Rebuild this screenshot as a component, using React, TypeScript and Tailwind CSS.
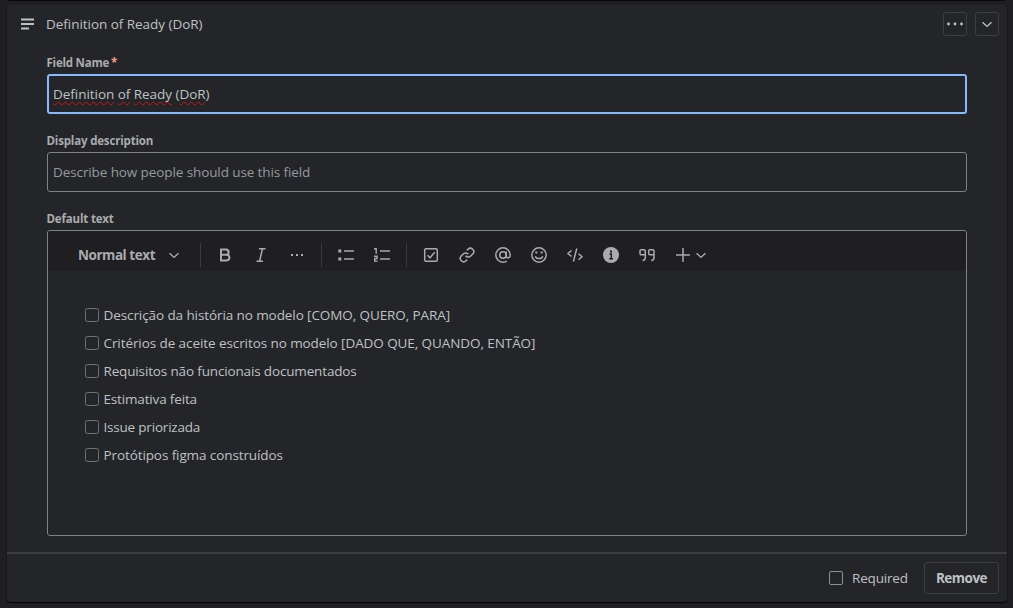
import type { ReactNode } from 'react';

const Icon = ({ children, className = '' }: { children: ReactNode; className?: string }) => (
  <svg
    width="24"
    height="24"
    viewBox="0 0 24 24"
    fill="none"
    stroke="currentColor"
    strokeWidth="1.5"
    className={`shrink-0 ${className}`}
  >
    {children}
  </svg>
);

const Tool = ({ label, children }: { label: string; children: ReactNode }) => (
  <button aria-label={label} className="flex h-8 w-9 items-center justify-center">
    <Icon>{children}</Icon>
  </button>
);

const Separator = () => <span className="h-6 w-px shrink-0 bg-[#3a3b3f]" />;

const Chevron = ({ className = '' }: { className?: string }) => (
  <Icon className={className}>
    <path d="M7.5 10.2l4.5 4.2 4.5-4.2" strokeWidth="1.4" />
  </Icon>
);

const tasks = [
  { text: 'Descrição da história no modelo [COMO, QUERO, PARA]', spacing: 'tracking-[-0.09px]' },
  { text: 'Critérios de aceite escritos no modelo [DADO QUE, QUANDO, ENTÃO]', spacing: 'tracking-[-0.08px]' },
  { text: 'Requisitos não funcionais documentados', spacing: 'tracking-[-0.15px]' },
  { text: 'Estimativa feita', spacing: 'tracking-[-0.16px]' },
  { text: 'Issue priorizada', spacing: 'tracking-[-0.2px]' },
  { text: 'Protótipos figma construídos', spacing: 'tracking-[-0.1px]' },
];

const misspelled =
  'underline decoration-wavy decoration-[#d01218] decoration-[1px] underline-offset-[2px] [text-decoration-skip-ink:none]';

export default function App() {
  return (
    <div className="flex h-[608px] w-[1013px] flex-col bg-[#1f1f21] font-['Open_Sans',sans-serif] text-[13.5px] text-[#bfc1c4]">
      <div className="mx-2 h-px shrink-0 bg-[#08080a]" />
      <section className="mt-[3px] mr-[6px] ml-[7px] flex h-[598px] flex-col rounded-[4px] bg-[#242528] shadow-[0_1px_1px_#050506,0_0_1px_#050506]">
        <header className="flex h-10 items-center pr-2 pl-[8px]">
          <Icon>
            <path d="M6 7.5h13M6 12h13M6 16.5h8" strokeWidth="2" />
          </Icon>
          <h1 className="ml-[7px] grow text-[13.5px] tracking-[-0.04px]">Definition of Ready (DoR)</h1>
          <button
            aria-label="More actions"
            className="mr-2 flex size-6 items-center justify-center rounded-[3px] border border-[#3c3d41]"
          >
            <svg width="16" height="4" viewBox="0 0 16 4" fill="currentColor" className="shrink-0">
              <circle cx="1.5" cy="2" r="1.4" />
              <circle cx="8" cy="2" r="1.4" />
              <circle cx="14.5" cy="2" r="1.4" />
            </svg>
          </button>
          <button
            aria-label="Collapse"
            className="flex size-6 items-center justify-center rounded-[3px] border border-[#3c3d41]"
          >
            <Chevron />
          </button>
        </header>

        <div className="flex grow flex-col pr-10 pl-10">
          <label className="mt-[11px] flex h-4 items-center text-[11.5px] font-bold tracking-[-0.22px] text-[#a9abaf]">
            <span className="-ml-[0.5px]">Field Name</span>
            <span className="ml-[2px] text-[#fd9891]">*</span>
          </label>
          <div className="mt-[3px] flex h-10 items-center rounded-[3px] border-2 border-[#85b8ff] px-[4px]">
            <p className="tracking-[-0.04px] whitespace-nowrap">
              <span className={misspelled}>Definition</span> <span className={misspelled}>of</span>{' '}
              <span className={misspelled}>Ready</span> (<span className={misspelled}>DoR</span>)
            </p>
          </div>

          <label className="mt-[19px] flex h-4 items-center text-[11.5px] font-bold tracking-[-0.17px] text-[#a9abaf]">
            <span className="-ml-[0.5px]">Display description</span>
          </label>
          <div className="mt-[3px] flex h-10 items-center rounded-[3px] border border-[#7e8188] px-[5px] tracking-[-0.1px] text-[#96999e]">
            Describe how people should use this field
          </div>

          <label className="mt-[19px] flex h-4 items-center text-[11.5px] font-bold tracking-[-0.17px] text-[#a9abaf]">
            <span className="-ml-[0.5px]">Default text</span>
          </label>
          <div className="mt-[3px] flex h-[306px] flex-col overflow-hidden rounded-[3px] border border-[#7e8188]">
            <div className="flex h-10 shrink-0 items-center bg-[#1f1f21] pt-[7px] pl-[30px] text-[#a9abaf]">
              <button className="flex h-8 w-[122px] items-center font-bold tracking-[-0.45px]">
                <span className="w-[84px] pt-[2px] text-left whitespace-nowrap">Normal text</span>
                <Chevron />
              </button>
              <Separator />
              <span className="w-[6px]" />
              <Tool label="Bold">
                <path
                  d="M8 6.6h5a2.6 2.6 0 010 5.2H8zM8 11.8h5.6a2.8 2.8 0 010 5.6H8z"
                  strokeWidth="2"
                />
              </Tool>
              <Tool label="Italic">
                <path d="M10 5.8h6.5M7.5 18.2H14M13.5 5.8L10.5 18.2" />
              </Tool>
              <Tool label="More formatting">
                <path d="M6 11h2v2H6zM11 11h2v2h-2zM16 11h2v2h-2z" fill="currentColor" stroke="none" />
              </Tool>
              <span className="w-[6px]" />
              <Separator />
              <span className="w-[6px]" />
              <Tool label="Bullet list">
                <path d="M10 8h10M10 16h10" />
                <path d="M4.3 6.5h3v3h-3zM4.3 14.5h3v3h-3z" fill="currentColor" stroke="none" />
              </Tool>
              <Tool label="Numbered list">
                <path d="M10 8h10M10 16h10" />
                <path d="M4 5.8h2.2v5M4 13.3h3v2.2H4.7v2.6h3" strokeWidth="1.4" />
              </Tool>
              <span className="w-[6px]" />
              <Separator />
              <span className="w-[6px]" />
              <Tool label="Action item">
                <rect x="5.7" y="5.7" width="12.6" height="12.6" rx="1.3" />
                <path d="M8.5 12.2l2.5 2.6 4.7-5.6" />
              </Tool>
              <Tool label="Link">
                <g transform="translate(3.9 3.9) scale(.675)">
                  <path
                    d="M10 13a5 5 0 0 0 7.54.54l3-3a5 5 0 0 0-7.07-7.07l-1.72 1.71M14 11a5 5 0 0 0-7.54-.54l-3 3a5 5 0 0 0 7.07 7.07l1.71-1.71"
                    strokeWidth="2.3"
                  />
                </g>
              </Tool>
              <Tool label="Mention">
                <circle cx="12" cy="12" r="3.2" />
                <path d="M15.2 8.5v4.6c0 2.7 4 2.2 4-1.1A7.2 7.2 0 1012 19.2c1.6 0 3-.5 3.8-1" />
              </Tool>
              <Tool label="Emoji">
                <circle cx="12" cy="12" r="7.2" />
                <path d="M8.3 13.2c1 3.2 6.4 3.2 7.4 0" />
                <path d="M9.3 8.6v2M14.7 8.6v2" strokeWidth="2" />
              </Tool>
              <Tool label="Code">
                <path d="M8.5 7.5L5 10.5l3.5 3M15.5 10.8l3.5 3-3.5 3M13.8 5.5l-3.4 13" strokeWidth="1.5" />
              </Tool>
              <Tool label="Info panel">
                <circle cx="12" cy="12" r="8" fill="currentColor" stroke="none" />
                <path d="M10.5 11h1.8v4.6M10.2 15.8h3.8" stroke="#1f1f21" strokeWidth="1.4" />
                <path d="M11 7.4h2v2h-2z" fill="#1f1f21" stroke="none" />
              </Tool>
              <Tool label="Quote">
                <path d="M10.3 11.8H6.4c-1 0-1.4-.5-1.4-1.4V8.1c0-.9.5-1.4 1.4-1.4h2.5c.9 0 1.4.5 1.4 1.4v6.3c0 1.8-1 2.9-2.8 3M19 11.8h-3.9c-1 0-1.4-.5-1.4-1.4V8.1c0-.9.5-1.4 1.4-1.4h2.5c.9 0 1.4.5 1.4 1.4v6.3c0 1.8-1 2.9-2.8 3" />
              </Tool>
              <button aria-label="Insert" className="flex h-8 items-center pl-[6px]">
                <Icon>
                  <path d="M12 5v14M5 12h14" />
                </Icon>
                <Chevron className="-ml-[6px]" />
              </button>
            </div>
            <ul className="flex flex-col pt-[30px] pl-[37px]">
              {tasks.map((task) => (
                <li key={task.text} className="flex h-7 items-center">
                  <span className="size-[14px] rounded-[2.5px] border border-[#6f7177]" />
                  <span className={`ml-[4.5px] ${task.spacing}`}>{task.text}</span>
                </li>
              ))}
            </ul>
          </div>
        </div>

        <footer className="flex h-[50px] shrink-0 items-center justify-end border-t-2 border-[#3b3c40] pr-2">
          <span className="size-[14px] rounded-[2px] border border-[#8c8f94]" />
          <span className="ml-[9px] w-[72px] tracking-[-0.18px]">Required</span>
          <button className="flex h-8 w-[75px] items-center justify-center rounded-[3px] border border-[#3c3d41] font-bold tracking-[-0.5px]">
            Remove
          </button>
        </footer>
      </section>
    </div>
  );
}
